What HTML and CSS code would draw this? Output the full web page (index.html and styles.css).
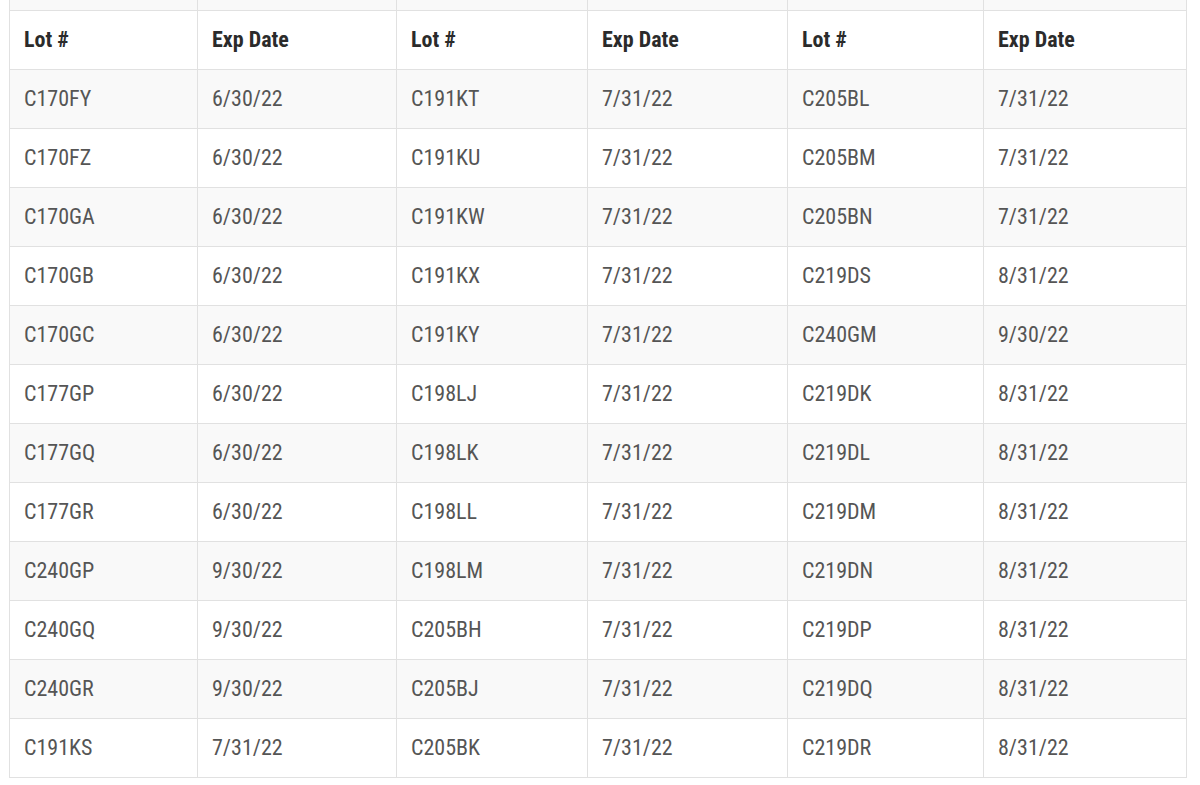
FILE: index.html
```html
<!DOCTYPE html>
<html>
<head>
<meta charset="utf-8">
<link rel="stylesheet" href="styles.css">
</head>
<body>
<div class="wrap">
<table class="lots">
<colgroup>
<col class="c1"><col class="c2"><col class="c3"><col class="c4"><col class="c5"><col class="c6">
</colgroup>
<tbody>
<tr class="prev"><td></td><td></td><td></td><td></td><td></td><td></td></tr>
<tr class="head"><th>Lot #</th><th>Exp Date</th><th>Lot #</th><th>Exp Date</th><th>Lot #</th><th>Exp Date</th></tr>
<tr class="odd"><td>C170FY</td><td>6/30/22</td><td>C191KT</td><td>7/31/22</td><td>C205BL</td><td>7/31/22</td></tr>
<tr><td>C170FZ</td><td>6/30/22</td><td>C191KU</td><td>7/31/22</td><td>C205BM</td><td>7/31/22</td></tr>
<tr class="odd"><td>C170GA</td><td>6/30/22</td><td>C191KW</td><td>7/31/22</td><td>C205BN</td><td>7/31/22</td></tr>
<tr><td>C170GB</td><td>6/30/22</td><td>C191KX</td><td>7/31/22</td><td>C219DS</td><td>8/31/22</td></tr>
<tr class="odd"><td>C170GC</td><td>6/30/22</td><td>C191KY</td><td>7/31/22</td><td>C240GM</td><td>9/30/22</td></tr>
<tr><td>C177GP</td><td>6/30/22</td><td>C198LJ</td><td>7/31/22</td><td>C219DK</td><td>8/31/22</td></tr>
<tr class="odd"><td>C177GQ</td><td>6/30/22</td><td>C198LK</td><td>7/31/22</td><td>C219DL</td><td>8/31/22</td></tr>
<tr><td>C177GR</td><td>6/30/22</td><td>C198LL</td><td>7/31/22</td><td>C219DM</td><td>8/31/22</td></tr>
<tr class="odd"><td>C240GP</td><td>9/30/22</td><td>C198LM</td><td>7/31/22</td><td>C219DN</td><td>8/31/22</td></tr>
<tr><td>C240GQ</td><td>9/30/22</td><td>C205BH</td><td>7/31/22</td><td>C219DP</td><td>8/31/22</td></tr>
<tr class="odd"><td>C240GR</td><td>9/30/22</td><td>C205BJ</td><td>7/31/22</td><td>C219DQ</td><td>8/31/22</td></tr>
<tr><td>C191KS</td><td>7/31/22</td><td>C205BK</td><td>7/31/22</td><td>C219DR</td><td>8/31/22</td></tr>
</tbody>
</table>
</div>
</body>
</html>
```
FILE: styles.css
```css
html, body {
  margin: 0;
  padding: 0;
  background: #ffffff;
}
.wrap {
  padding-left: 9px;
}
.lots {
  border-collapse: collapse;
  table-layout: fixed;
  width: 1177px;
  font-family: "Roboto Condensed", Roboto, "Liberation Sans", sans-serif;
  font-stretch: 75%;
  font-size: 22px;
}
.c1 { width: 188px; }
.c2 { width: 199px; }
.c3 { width: 191px; }
.c4 { width: 200px; }
.c5 { width: 196px; }
.c6 { width: 203px; }
.lots td, .lots th {
  border: 1px solid #e1e1e1;
  height: 59px;
  padding: 0 14px;
  text-align: left;
  vertical-align: middle;
  box-sizing: border-box;
}
.lots th {
  font-weight: 700;
  color: #2b2b2b;
}
.lots td {
  font-weight: 400;
  color: #555555;
}
.lots tr.prev td {
  height: 10px;
  padding: 0;
  background: #f9f9f9;
  border-top: none;
}
.lots tr.odd td {
  background: #f9f9f9;
}
```
